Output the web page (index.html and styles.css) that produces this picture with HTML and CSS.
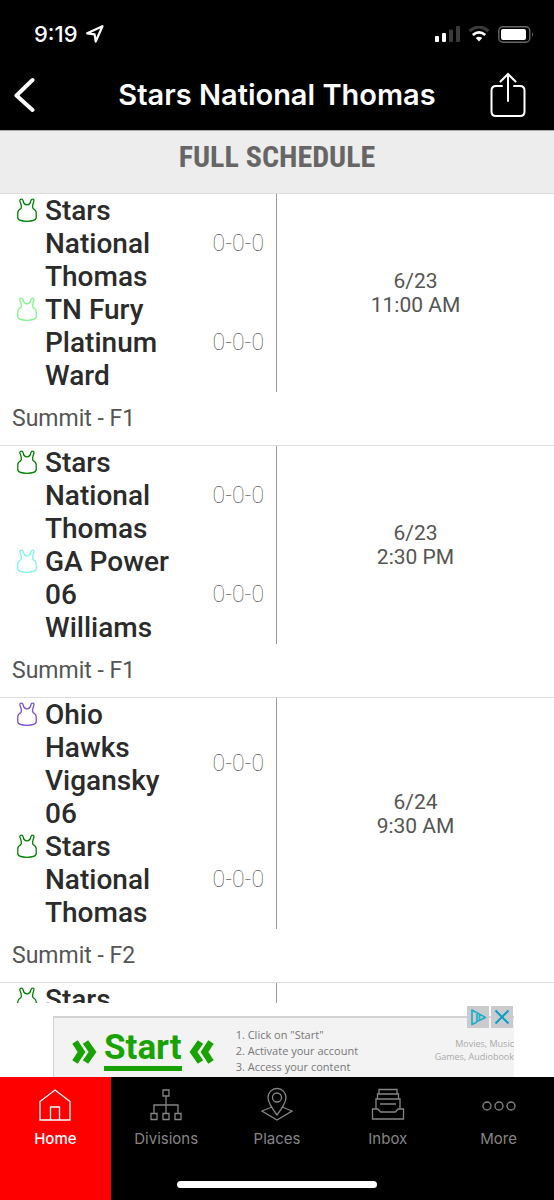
FILE: index.html
```html
<!DOCTYPE html>
<html lang="en">
<head>
<meta charset="utf-8">
<meta name="viewport" content="width=device-width, initial-scale=1">
<title>Stars National Thomas</title>
<link rel="stylesheet" href="styles.css">
</head>
<body>
<svg class="defs" width="0" height="0" aria-hidden="true">
  <symbol id="jersey" viewBox="0 0 20 24">
    <path d="M3 3.500Q2.500 1.200 4.200 1.200Q5.600 1 6.200 3Q7 6.800 10 6.800Q13 6.800 13.800 3Q14.400 1 15.800 1.200Q17.300 1.200 16.800 3.500Q15 8 16 10.500Q19.300 12.500 19.200 14.500V20Q18.500 23.300 10 23.300Q1.500 23.300 .8 20V14.500Q.7 12.500 4 10.500Q5 8 3 3.500Z" fill="none" stroke="currentColor" stroke-width="1.300"/>
  </symbol>
</svg>

<header class="top">
  <div class="status">
    <span class="clock">9:19</span>
    <svg class="locate" width="18" height="18" viewBox="0 0 18 18"><path d="M1.200 8.300L16.500 1.200L9.700 16.500L8.600 9.400Z" fill="none" stroke="#fff" stroke-width="2.200" stroke-linejoin="round"/></svg>
    <svg width="25" height="16" viewBox="0 0 25 16"><g fill="#fff"><rect x="0" y="10" width="4" height="6" rx="1"/><rect x="7" y="7" width="4" height="9" rx="1"/></g><g fill="#3a3a3a"><rect x="14" y="3.500" width="4" height="12.500" rx="1"/><rect x="21" y="0" width="4" height="16" rx="1"/></g></svg>
    <svg width="22" height="16" viewBox="0 0 22 16"><path d="M1.500 5Q11-3 20.500 5" fill="none" stroke="#3a3a3a" stroke-width="3"/><path d="M4.800 9Q11 3.800 17.200 9" fill="none" stroke="#fff" stroke-width="2.800"/><path d="M7.800 12Q11 9.500 14.200 12L11 15.500Z" fill="#fff"/></svg>
    <svg width="36" height="17" viewBox="0 0 36 17"><rect x=".8" y=".8" width="31" height="15.400" rx="4" fill="none" stroke="#666" stroke-width="1.400"/><rect x="3" y="3" width="25" height="11" rx="2" fill="#fff"/><path d="M34 6Q36 8.500 34 11Z" fill="#666"/></svg>
  </div>
  <div class="nav">
    <button class="icon-btn" aria-label="Back"><svg width="22" height="36" viewBox="0 0 22 36"><path d="M18.500 3L2.500 18.500L18.500 33" fill="none" stroke="#fff" stroke-width="4" stroke-linecap="round" stroke-linejoin="round"/></svg></button>
    <h1 class="nav-title">Stars National Thomas</h1>
    <button class="icon-btn share" aria-label="Share"><svg width="36" height="46" viewBox="0 0 36 46"><path d="M12 14H6Q1.500 14 1.500 18.500V39.500Q1.500 44 6 44H30Q34.500 44 34.500 39.500V18.500Q34.500 14 30 14H24M18 29V2M10.500 9.500L18 2L25.500 9.500" fill="none" stroke="#fff" stroke-width="2" stroke-linecap="round"/></svg></button>
  </div>
</header>

<main class="schedule">
  <h2 class="section-title">FULL SCHEDULE</h2>
  <div class="games">
    <article class="game">
      <div class="matchup">
        <div class="teams">
          <div class="team"><svg class="jersey green"><use href="#jersey"/></svg><span class="name">Stars National Thomas</span><span class="record">0-0-0</span></div>
          <div class="team"><svg class="jersey lime"><use href="#jersey"/></svg><span class="name">TN Fury Platinum Ward</span><span class="record">0-0-0</span></div>
        </div>
        <div class="when"><span>6/23</span><span>11:00 AM</span></div>
      </div>
      <p class="venue">Summit - F1</p>
    </article>
    <article class="game">
      <div class="matchup">
        <div class="teams">
          <div class="team"><svg class="jersey green"><use href="#jersey"/></svg><span class="name">Stars National Thomas</span><span class="record">0-0-0</span></div>
          <div class="team"><svg class="jersey aqua"><use href="#jersey"/></svg><span class="name">GA Power 06 Williams</span><span class="record">0-0-0</span></div>
        </div>
        <div class="when"><span>6/23</span><span>2:30 PM</span></div>
      </div>
      <p class="venue">Summit - F1</p>
    </article>
    <article class="game">
      <div class="matchup">
        <div class="teams">
          <div class="team"><svg class="jersey purple"><use href="#jersey"/></svg><span class="name">Ohio Hawks Vigansky 06</span><span class="record">0-0-0</span></div>
          <div class="team"><svg class="jersey green"><use href="#jersey"/></svg><span class="name">Stars National Thomas</span><span class="record">0-0-0</span></div>
        </div>
        <div class="when"><span>6/24</span><span>9:30 AM</span></div>
      </div>
      <p class="venue">Summit - F2</p>
    </article>
    <article class="game">
      <div class="matchup">
        <div class="teams">
          <div class="team"><svg class="jersey green"><use href="#jersey"/></svg><span class="name">Stars</span></div>
        </div>
      </div>
    </article>
  </div>
</main>

<aside class="ad-slot" aria-label="Advertisement">
  <div class="ad">
    <a class="ad-start" href="#">
      <svg width="25" height="26" viewBox="0 0 25 26"><path d="M3 3L9.500 13L3 23M13.500 3L20.500 13L13.500 23" fill="none" stroke="#18a303" stroke-width="6.500"/></svg>
      <span class="ad-word">Start</span>
      <svg width="25" height="26" viewBox="0 0 25 26"><path d="M22 3L15.500 13L22 23M11.500 3L4.500 13L11.500 23" fill="none" stroke="#18a303" stroke-width="6.500"/></svg>
    </a>
    <ol class="ad-steps"><li>1. Click on "Start"</li><li>2. Activate your account</li><li>3. Access your content</li></ol>
    <p class="ad-kinds"><span>Movies, Music</span><span>Games, Audiobook</span></p>
    <div class="ad-controls">
      <button class="ad-btn" aria-label="Ad choices"><svg width="22" height="22" viewBox="0 0 22 22"><path d="M10 8V15.500L18.500 11.500L5 4V18.500L10 16M12.500 9V13.500" fill="none" stroke="#20afc9" stroke-width="1.700" stroke-linejoin="round"/></svg></button>
      <button class="ad-btn" aria-label="Close ad"><svg width="22" height="22" viewBox="0 0 22 22"><path d="M4.500 4.500L17.500 17.500M17.500 4.500L4.500 17.500" stroke="#089fc4" stroke-width="2"/></svg></button>
    </div>
  </div>
</aside>

<nav class="tabs">
  <a class="tab active" href="#"><svg width="36" height="36" viewBox="0 0 36 36"><path d="M3 33V14.500L18 3L33 14.500V33ZM13.500 33V20H22.500V33"/></svg>Home</a>
  <a class="tab" href="#"><svg width="36" height="36" viewBox="0 0 36 36"><path d="M15 3H21V9H15ZM3 26.500H9V32.500H3ZM15 26.500H21V32.500H15ZM27 26.500H33V32.500H27ZM18 9V26.500M6 26.500V18H30V26.500"/></svg>Divisions</a>
  <a class="tab" href="#"><svg width="36" height="36" viewBox="0 0 36 36"><path d="M18 28Q9 16 9 10.500A9 9 0 0 1 27 10.500Q27 16 18 28ZM13 20L3 24L18 33L33 24L23 20"/><circle cx="18" cy="10.500" r="4.500"/></svg>Places</a>
  <a class="tab" href="#"><svg width="36" height="36" viewBox="0 0 36 36"><path d="M9 7V2.500H27V7M7.500 12V7H28.500V12M6 22V12H30V22M10 17H26M2.500 32V22H8L10.500 25H25.500L28 22H33.500V32Z"/></svg>Inbox</a>
  <a class="tab" href="#"><svg width="36" height="36" viewBox="0 0 36 36"><circle cx="6" cy="19" r="4"/><circle cx="18" cy="19" r="4"/><circle cx="30" cy="19" r="4"/></svg>More</a>
  <span class="home-bar"></span>
</nav>
</body>
</html>
```

FILE: styles.css
```css
* { box-sizing: border-box; }

body {
  margin: 0;
  height: 100vh;
  display: flex;
  flex-direction: column;
  background: #fff;
  color: #555;
  font-family: Roboto, "Liberation Sans", sans-serif;
}

h1, h2, p, ol { margin: 0; padding: 0; }
button { padding: 0; border: 0; background: none; }
svg { display: block; flex: none; }
.defs { position: absolute; }

/* Status bar and navigation */
.top {
  flex: none;
  background: #000;
  color: #fff;
  border-bottom: 1px solid #aaa;
  font-family: Inter, "Liberation Sans", sans-serif;
}

.status {
  display: flex;
  align-items: center;
  gap: 8px;
  height: 48px;
  padding: 20px 20px 0 34px;
}

.clock { font-size: 22px; font-weight: 500; line-height: 28px; }
.locate { margin-right: auto; }

.nav {
  display: grid;
  grid-template-columns: 1fr auto 1fr;
  align-items: center;
  height: 82px;
  padding: 12px 28px 0 14px;
}

.nav-title {
  grid-column: 2;
  padding-left: 14px;
  font-size: 29px;
  font-weight: 600;
  line-height: 36px;
}

.share { justify-self: end; }

/* Schedule */
.schedule {
  flex: 1;
  min-height: 0;
  overflow: hidden;
}

.section-title {
  height: 62px;
  padding-top: 8px;
  background: #ededed;
  color: #666;
  text-align: center;
  font: bold 30px/36px "Liberation Sans Narrow", "Roboto Condensed", Roboto, sans-serif;
}

.game { border-top: 1px solid #ddd; }
.matchup { display: grid; grid-template-columns: 1fr 1fr; }
.teams { border-right: 1px solid #999; }

.team {
  display: grid;
  grid-template-columns: 20px 1fr 72px;
  gap: 8px;
  padding: 0 12px 0 17px;
}

.jersey { width: 20px; height: 24px; margin-top: 4px; }
.green { color: #008000; }
.lime { color: #85f58a; }
.aqua { color: #7ff5ea; }
.purple { color: #7b4fd6; }

.name { color: #2b2b2b; font-size: 28px; font-weight: 500; line-height: 33px; }

.record {
  align-self: center;
  color: #555;
  font-size: 23px;
  font-weight: 100;
  line-height: 28px;
  text-align: right;
}

.when {
  display: flex;
  flex-direction: column;
  align-items: center;
  justify-content: center;
  font-size: 21px;
  line-height: 24px;
}

.venue { padding: 13px 12px 12px; font-size: 23px; line-height: 28px; }

/* Advertisement */
.ad-slot { flex: none; padding: 13px 40px 0 53px; background: #fff; }

.ad {
  position: relative;
  display: flex;
  gap: 22px;
  height: 61px;
  padding-left: 18px;
  background: #f3f3f4;
  border: solid #d3d3d6;
  border-width: 2px 0 0 1px;
  font-family: "Open Sans", "Noto Sans", sans-serif;
}

.ad-start {
  display: flex;
  align-items: center;
  gap: 7px;
  height: 68px;
  color: #18a303;
  text-decoration: none;
}

.ad-word {
  height: 38px;
  border-bottom: 5px solid;
  font: 700 35px/30px Roboto, sans-serif;
}

.ad-steps {
  padding-top: 9px;
  list-style: none;
  color: #777;
  font-size: 11px;
  line-height: 16px;
  white-space: nowrap;
}

.ad-kinds {
  display: flex;
  flex-direction: column;
  align-items: flex-end;
  margin-left: auto;
  padding-top: 19px;
  color: #aaa;
  font-size: 9px;
  line-height: 13px;
  white-space: nowrap;
}

.ad-controls {
  position: absolute;
  top: -12px;
  right: 1px;
  display: flex;
  gap: 2px;
}

.ad-btn { background: #cbcbcd; }

/* Tab bar */
.tabs {
  position: relative;
  flex: none;
  display: grid;
  grid-template-columns: repeat(5, 1fr);
  height: 123px;
  background: #000;
}

.tab {
  display: flex;
  flex-direction: column;
  align-items: center;
  gap: 6px;
  padding-top: 10px;
  color: #858585;
  font: 400 15px/20px Inter, sans-serif;
  text-decoration: none;
}

.tab svg { fill: none; stroke: currentColor; stroke-width: 1.3; }
.active { background: #f00; color: #fff; font-weight: 500; }

.home-bar {
  position: absolute;
  bottom: 12px;
  left: 32%;
  width: 36%;
  height: 7px;
  border-radius: 4px;
  background: #fff;
}
```
